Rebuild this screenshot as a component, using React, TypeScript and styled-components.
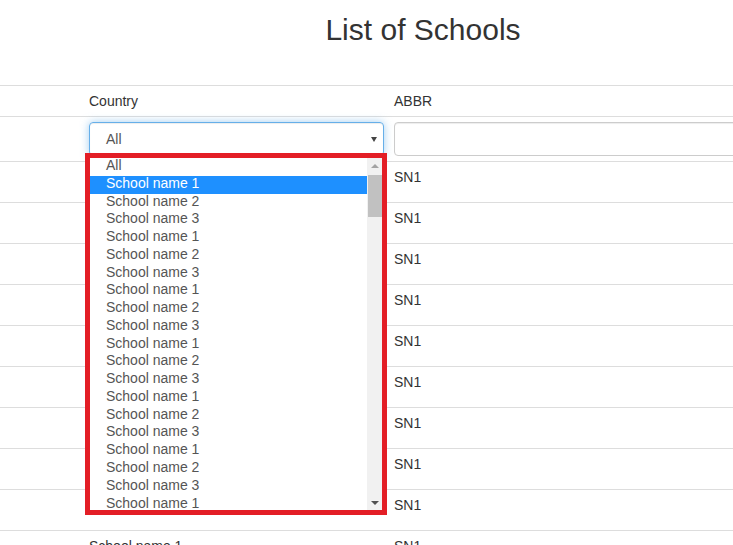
import React from 'react'
import styled, { createGlobalStyle } from 'styled-components'

const GlobalStyle = createGlobalStyle`
  html, body {
    margin: 0;
    padding: 0;
    background: #fff;
  }
  body {
    font-family: 'Liberation Sans', Arial, Helvetica, sans-serif;
    font-size: 14px;
    line-height: 20px;
    color: #333;
    overflow: hidden;
  }
`

const Page = styled.div`
  width: 733px;
  height: 545px;
  overflow: hidden;
`

const Container = styled.div`
  width: 846px;
`

const Title = styled.h2`
  margin: 13px 0 39px;
  font-size: 30px;
  line-height: 33px;
  font-weight: 500;
  text-align: center;
  color: #333;
`

const Row = styled.div<{ $height: number }>`
  display: grid;
  grid-template-columns: 84px 305px 1fr;
  height: ${(p) => p.$height}px;
  box-sizing: border-box;
  border-top: 1px solid #ddd;
`

const Cell = styled.div`
  padding: 5px;
  min-width: 0;
`

const SelectWrap = styled.div`
  position: relative;
`

const SelectBox = styled.div`
  height: 34px;
  box-sizing: border-box;
  border: 1px solid #66afe9;
  border-radius: 4px;
  box-shadow: inset 0 1px 1px rgba(0, 0, 0, 0.075),
    0 0 8px rgba(102, 175, 233, 0.6);
  padding: 0 6px 0 16px;
  display: flex;
  align-items: center;
  justify-content: space-between;
  color: #555;
`

const Caret = styled.span`
  width: 0;
  height: 0;
  border-left: 3px solid transparent;
  border-right: 3px solid transparent;
  border-top: 5px solid #444;
`

const TextInput = styled.input`
  display: block;
  width: 100%;
  height: 34px;
  box-sizing: border-box;
  border: 1px solid #ccc;
  border-radius: 4px;
  box-shadow: inset 0 1px 1px rgba(0, 0, 0, 0.075);
  padding: 6px 12px;
  font: inherit;
  color: #555;
  outline: none;
`

// open dropdown of the Country select
const Popup = styled.div`
  position: absolute;
  top: 35px;
  left: 0;
  width: 294px;
  height: 354px;
  box-sizing: border-box;
  border: 1px solid #a9a9a9;
  background: #fff;
  display: flex;
  z-index: 2;
`

const OptionList = styled.div`
  flex: 1;
  overflow: hidden;
`

const Option = styled.div<{ $selected?: boolean }>`
  height: 17.78px;
  line-height: 14px;
  padding-left: 16px;
  white-space: nowrap;
  color: ${(p) => (p.$selected ? '#fff' : '#555')};
  background: ${(p) => (p.$selected ? '#1e90ff' : 'transparent')};
`

const ScrollTrack = styled.div`
  width: 15px;
  background: #f1f1f1;
  display: flex;
  flex-direction: column;
`

const ScrollButton = styled.div`
  height: 15px;
  display: flex;
  align-items: center;
  justify-content: center;
`

const Arrow = styled.span<{ $dir: 'up' | 'down'; $color: string }>`
  width: 0;
  height: 0;
  border-left: 4px solid transparent;
  border-right: 4px solid transparent;
  ${(p) =>
    p.$dir === 'up'
      ? `border-bottom: 4px solid ${p.$color};`
      : `border-top: 4px solid ${p.$color};`}
`

const Thumb = styled.div`
  height: 42px;
  margin: 2px 0 0 1px;
  background: #c1c1c1;
`

const Spacer = styled.div`
  flex: 1;
`

// red annotation frame round the dropdown
const Highlight = styled.div`
  position: absolute;
  left: -4px;
  top: 31px;
  width: 302px;
  height: 362px;
  box-sizing: border-box;
  border: 5px solid #e31e26;
  pointer-events: none;
  z-index: 3;
`

const names = ['School name 1', 'School name 2', 'School name 3']
const options = ['All', ...Array.from({ length: 19 }, (_, i) => names[i % 3])]
const rows = Array.from({ length: 10 }, (_, i) => ({
  country: names[i % 3],
  abbr: 'SN1',
}))

const App: React.FC = () => {
  return (
    <Page>
      <GlobalStyle />
      <Container>
        <Title>List of Schools</Title>
        <Row $height={31}>
          <Cell />
          <Cell>Country</Cell>
          <Cell>ABBR</Cell>
        </Row>
        <Row $height={45}>
          <Cell />
          <Cell>
            <SelectWrap>
              <SelectBox>
                <span>All</span>
                <Caret />
              </SelectBox>
              <Popup>
                <OptionList>
                  {options.map((opt, i) => (
                    <Option key={i} $selected={i === 1}>
                      {opt}
                    </Option>
                  ))}
                </OptionList>
                <ScrollTrack>
                  <ScrollButton>
                    <Arrow $dir="up" $color="#a3a3a3" />
                  </ScrollButton>
                  <Thumb />
                  <Spacer />
                  <ScrollButton>
                    <Arrow $dir="down" $color="#505050" />
                  </ScrollButton>
                </ScrollTrack>
              </Popup>
              <Highlight />
            </SelectWrap>
          </Cell>
          <Cell>
            <TextInput type="text" />
          </Cell>
        </Row>
        {rows.map((row, i) => (
          <Row key={i} $height={41}>
            <Cell />
            <Cell>{row.country}</Cell>
            <Cell>{row.abbr}</Cell>
          </Row>
        ))}
      </Container>
    </Page>
  )
}

export default App
